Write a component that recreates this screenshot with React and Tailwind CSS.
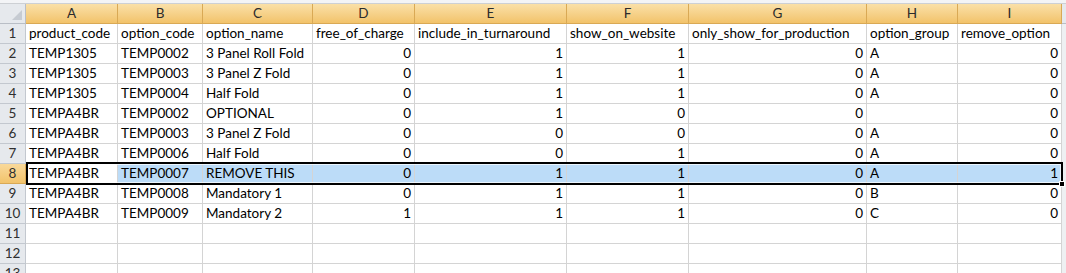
import React from "react";

const COLS = [
  { key: "A", w: 92 },
  { key: "B", w: 85 },
  { key: "C", w: 110 },
  { key: "D", w: 102 },
  { key: "E", w: 152 },
  { key: "F", w: 122 },
  { key: "G", w: 178 },
  { key: "H", w: 91 },
  { key: "I", w: 104 },
];

// numeric columns get right-aligned like Excel does
const NUMERIC = [false, false, false, true, true, true, true, false, true];

const ROWS = [
  ["product_code", "option_code", "option_name", "free_of_charge", "include_in_turnaround", "show_on_website", "only_show_for_production", "option_group", "remove_option"],
  ["TEMP1305", "TEMP0002", "3 Panel Roll Fold", "0", "1", "1", "0", "A", "0"],
  ["TEMP1305", "TEMP0003", "3 Panel Z Fold", "0", "1", "1", "0", "A", "0"],
  ["TEMP1305", "TEMP0004", "Half Fold", "0", "1", "1", "0", "A", "0"],
  ["TEMPA4BR", "TEMP0002", "OPTIONAL", "0", "1", "0", "0", "", "0"],
  ["TEMPA4BR", "TEMP0003", "3 Panel Z Fold", "0", "0", "0", "0", "A", "0"],
  ["TEMPA4BR", "TEMP0006", "Half Fold", "0", "0", "1", "0", "A", "0"],
  ["TEMPA4BR", "TEMP0007", "REMOVE THIS", "0", "1", "1", "0", "A", "1"],
  ["TEMPA4BR", "TEMP0008", "Mandatory 1", "0", "1", "1", "0", "B", "0"],
  ["TEMPA4BR", "TEMP0009", "Mandatory 2", "1", "1", "1", "0", "C", "0"],
  ["", "", "", "", "", "", "", "", ""],
  ["", "", "", "", "", "", "", "", ""],
  ["", "", "", "", "", "", "", "", ""],
];

const SELECTED = 8;

function Cell({ value, width, right, selected }) {
  return (
    <div
      className={`h-5 shrink-0 border-r border-b border-[#d4d4d4] px-[3px] leading-[19px] whitespace-nowrap overflow-hidden ${
        right ? "text-right" : "text-left"
      } ${selected ? "bg-[#bcdcf8]" : "bg-white"}`}
      style={{ width }}
    >
      {value}
    </div>
  );
}

export default function App() {
  return (
    <div
      className="relative w-[1066px] h-[273px] overflow-hidden bg-white text-[13.5px] text-black"
      style={{ fontFamily: "Lato, 'Liberation Sans', sans-serif" }}
    >
      {/* toolbar edge */}
      <div className="h-1 bg-[#f3f4f6] border-b border-[#cdd0d4]" />

      {/* column headers */}
      <div className="flex">
        <div className="relative h-5 w-[26px] shrink-0 bg-[#e6e9ed] border-r border-b border-[#b9bec6]">
          <div className="absolute right-[3px] bottom-[3px] w-0 h-0 border-l-[10px] border-l-transparent border-b-[10px] border-b-[#c6cbd2]" />
        </div>
        {COLS.map((c) => (
          <div
            key={c.key}
            className="h-5 shrink-0 border-r border-b border-[#d9a955] bg-gradient-to-b from-[#fae0a8] to-[#f2c36a] text-center leading-[19px] text-[#2b2b2b]"
            style={{ width: c.w }}
          >
            {c.key}
          </div>
        ))}
        <div className="h-5 flex-1 bg-[#e6e9ed] border-b border-[#b9bec6]" />
      </div>

      {/* rows */}
      {ROWS.map((row, i) => {
        const n = i + 1;
        const sel = n === SELECTED;
        return (
          <div key={n} className="flex">
            <div
              className={`h-5 w-[26px] shrink-0 border-r border-b text-center leading-[19px] text-[#2f2f2f] ${
                sel
                  ? "bg-gradient-to-b from-[#f9d99a] to-[#f2c36a] border-[#d9a955]"
                  : "bg-[#e6e9ed] border-[#c3c8cf]"
              }`}
            >
              {n}
            </div>
            {COLS.map((c, j) => (
              <Cell
                key={c.key}
                value={row[j]}
                width={c.w}
                right={NUMERIC[j] && i > 0}
                selected={sel && j > 0}
              />
            ))}
            <div className="h-5 flex-1 bg-[#eef0f2]" />
          </div>
        );
      })}

      {/* selection outline over row 8 */}
      <div className="absolute left-[26px] top-[162px] w-[1037px] h-[23px] border-[2px] border-black pointer-events-none">
        <div className="h-full w-full border border-white/70" />
        <div className="absolute -right-[4px] -bottom-[4px] w-[6px] h-[6px] bg-black border border-white" />
      </div>
    </div>
  );
}
